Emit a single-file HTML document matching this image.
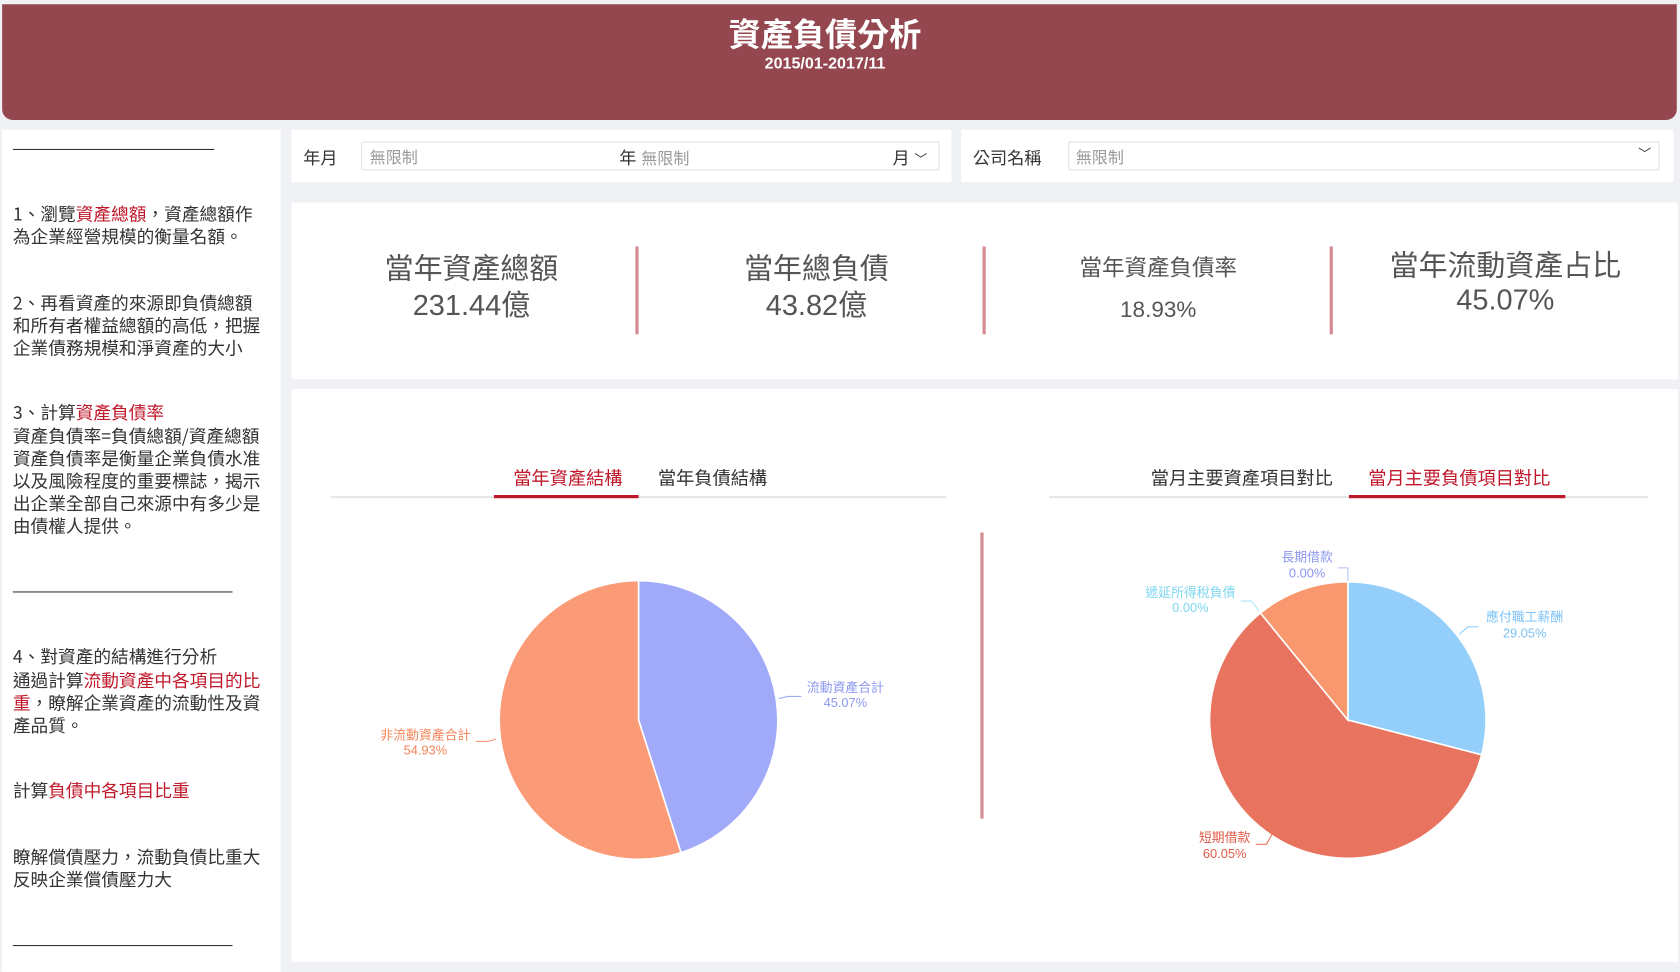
<!DOCTYPE html>
<html><head><meta charset="utf-8"><style>
*{margin:0;padding:0;box-sizing:border-box}
html,body{width:1680px;height:972px;overflow:hidden;background:#f0f1f5}
#w{position:absolute;left:0;top:0;width:1568px;height:907px;transform:scale(1.07143);transform-origin:0 0;font-family:"Liberation Sans","Noto Sans CJK TC",sans-serif;color:#333}
.p{position:absolute;background:#fff}
.t{position:absolute;white-space:nowrap}
.r{color:#c0182b}
#left .t{font-size:16.5px;left:12px;line-height:21px;font-family:"Noto Sans CJK TC",sans-serif;top:0}
#left .ln{position:absolute;left:12px;height:1px;background:#333}
.kl{position:absolute;text-align:center;width:300px;color:#555}
.sep{position:absolute;width:3px;background:#d48b93}
</style></head><body><div id="w">
<div class="p" style="left:2px;top:4px;width:1563px;height:108px;background:#94474f;border-radius:0 0 10px 10px"></div>
<div class="t" style="left:0;width:1540px;text-align:center;top:8px;font-size:30px;font-weight:bold;color:#fff">資產負債分析</div>
<div class="t" style="left:0;width:1540px;text-align:center;top:51px;font-size:15px;font-weight:bold;color:#fff">2015/01-2017/11</div>

<div class="p" style="left:2px;top:121px;width:260px;height:786px"></div>
<div id="left">
<div class="ln" style="top:139px;width:188px"></div>
<div class="t" style="top:189px">1、瀏覽<span class="r">資產總額</span>，資產總額作</div>
<div class="t" style="top:210px">為企業經營規模的衡量名額。</div>
<div class="t" style="top:272px">2、再看資產的來源即負債總額</div>
<div class="t" style="top:293px">和所有者權益總額的高低，把握</div>
<div class="t" style="top:314px">企業債務規模和淨資產的大小</div>
<div class="t" style="top:374px">3、計算<span class="r">資產負債率</span></div>
<div class="t" style="top:396px">資產負債率=負債總額/資產總額</div>
<div class="t" style="top:417px">資產負債率是衡量企業負債水准</div>
<div class="t" style="top:438px">以及風險程度的重要標誌，揭示</div>
<div class="t" style="top:459px">出企業全部自己來源中有多少是</div>
<div class="t" style="top:480px">由債權人提供。</div>
<div class="ln" style="top:552px;width:205px"></div>
<div class="t" style="top:602px">4、對資產的結構進行分析</div>
<div class="t" style="top:624px">通過計算<span class="r">流動資產中各項目的比</span></div>
<div class="t" style="top:645px"><span class="r">重</span>，瞭解企業資產的流動性及資</div>
<div class="t" style="top:666px">產品質。</div>
<div class="t" style="top:727px">計算<span class="r">負債中各項目比重</span></div>
<div class="t" style="top:789px">瞭解償債壓力，流動負債比重大</div>
<div class="t" style="top:810px">反映企業償債壓力大</div>
<div class="ln" style="top:882px;width:205px"></div>
</div>

<div class="p" style="left:272px;top:121px;width:616px;height:49px"></div>
<div class="t" style="left:283px;top:134px;font-size:16px">年月</div>
<div class="p" style="left:337px;top:132px;width:540px;height:27px;border:1px solid #e2e2e2;border-radius:2px"></div>
<div class="t" style="left:345px;top:136px;font-size:15px;color:#999">無限制</div>
<div class="t" style="left:578px;top:134px;font-size:16px">年 <span style="color:#999;font-size:15px">無限制</span></div>
<div class="t" style="left:833px;top:134px;font-size:16px">月 <span style="font-size:12px">﹀</span></div>
<div class="p" style="left:897px;top:121px;width:665px;height:49px"></div>
<div class="t" style="left:908px;top:134px;font-size:16px">公司名稱</div>
<div class="p" style="left:997px;top:132px;width:552px;height:27px;border:1px solid #e2e2e2;border-radius:2px"></div>
<div class="t" style="left:1004px;top:136px;font-size:15px;color:#999">無限制</div>
<div class="t" style="left:1529px;top:135px;font-size:12px">﹀</div>

<div class="p" style="left:272px;top:189px;width:1294px;height:165px"></div>
<div class="kl" style="left:290px;top:234px;font-size:27px;line-height:34px">當年資產總額<br>231.44億</div>
<div class="kl" style="left:612px;top:234px;font-size:27px;line-height:34px">當年總負債<br>43.82億</div>
<div class="kl" style="left:931px;top:234px;font-size:21px">當年資產負債率</div>
<div class="kl" style="left:931px;top:278px;font-size:21px">18.93%</div>
<div class="kl" style="left:1255px;top:232px;font-size:27px;line-height:32px">當年流動資產占比<br>45.07%</div>
<div class="sep" style="left:593px;top:230px;height:82px"></div>
<div class="sep" style="left:917px;top:230px;height:82px"></div>
<div class="sep" style="left:1241px;top:230px;height:82px"></div>

<div class="p" style="left:272px;top:363px;width:1294px;height:535px"></div>
<div style="position:absolute;left:309px;top:463px;width:574px;height:2px;background:#e6e6e6"></div>
<div style="position:absolute;left:461px;top:462px;width:135px;height:3px;background:#c0182b"></div>
<div class="t r" style="left:479px;top:432px;font-size:17px">當年資產結構</div>
<div class="t" style="left:614px;top:432px;font-size:17px">當年負債結構</div>
<div style="position:absolute;left:979px;top:463px;width:559px;height:2px;background:#e6e6e6"></div>
<div style="position:absolute;left:1259px;top:462px;width:202px;height:3px;background:#c0182b"></div>
<div class="t" style="left:1074px;top:432px;font-size:17px">當月主要資產項目對比</div>
<div class="t r" style="left:1277px;top:432px;font-size:17px">當月主要負債項目對比</div>
<div class="sep" style="left:915px;top:497px;height:267px"></div>

<svg style="position:absolute;left:0;top:0" width="1568" height="907" font-family="Liberation Sans,Noto Sans CJK TC,sans-serif" font-size="12">
<path d="M596 672 L596 542 A130 130 0 0 1 635.6 795.8 Z" fill="#a0aaf8" stroke="#fff" stroke-width="1.5"/>
<path d="M596 672 L635.6 795.8 A130 130 0 1 1 596 542 Z" fill="#fa9a76" stroke="#fff" stroke-width="1.5"/>
<polyline points="727,652 735,650 748,650" fill="none" stroke="#a0aaf8"/>
<text x="789" y="646" fill="#8c98f0" text-anchor="middle">流動資產合計</text>
<text x="789" y="660" fill="#8c98f0" text-anchor="middle">45.07%</text>
<polyline points="463,690 455,692 444,692" fill="none" stroke="#fa9a76"/>
<text x="397" y="690" fill="#f5845a" text-anchor="middle">非流動資產合計</text>
<text x="397" y="704" fill="#f5845a" text-anchor="middle">54.93%</text>

<path d="M1258 672 L1258 543 A129 129 0 0 1 1382.8 704.5 Z" fill="#93cffa" stroke="#fff" stroke-width="1.5"/>
<path d="M1258 672 L1382.8 704.5 A129 129 0 1 1 1176.4 572.1 Z" fill="#e8735f" stroke="#fff" stroke-width="1.5"/>
<path d="M1258 672 L1176.4 572.1 A129 129 0 0 1 1258 543 Z" fill="#f9986f" stroke="#fff" stroke-width="1.5"/>
<polyline points="1362,592 1370,585 1380,585" fill="none" stroke="#93cffa"/>
<text x="1423" y="580" fill="#7cc2f5" text-anchor="middle">應付職工薪酬</text>
<text x="1423" y="595" fill="#7cc2f5" text-anchor="middle">29.05%</text>
<polyline points="1258,542 1258,530 1249,530" fill="none" stroke="#b5bcf8"/>
<text x="1220" y="524" fill="#8c98f0" text-anchor="middle">長期借款</text>
<text x="1220" y="539" fill="#8c98f0" text-anchor="middle">0.00%</text>
<polyline points="1175,570 1168,561 1158,561" fill="none" stroke="#a9e6f5"/>
<text x="1111" y="557" fill="#7dd7f0" text-anchor="middle">遞延所得稅負債</text>
<text x="1111" y="571" fill="#7dd7f0" text-anchor="middle">0.00%</text>
<polyline points="1187,779 1182,788 1172,788" fill="none" stroke="#e8735f"/>
<text x="1143" y="786" fill="#e05a48" text-anchor="middle">短期借款</text>
<text x="1143" y="801" fill="#e05a48" text-anchor="middle">60.05%</text>
</svg>
</div></body></html>
